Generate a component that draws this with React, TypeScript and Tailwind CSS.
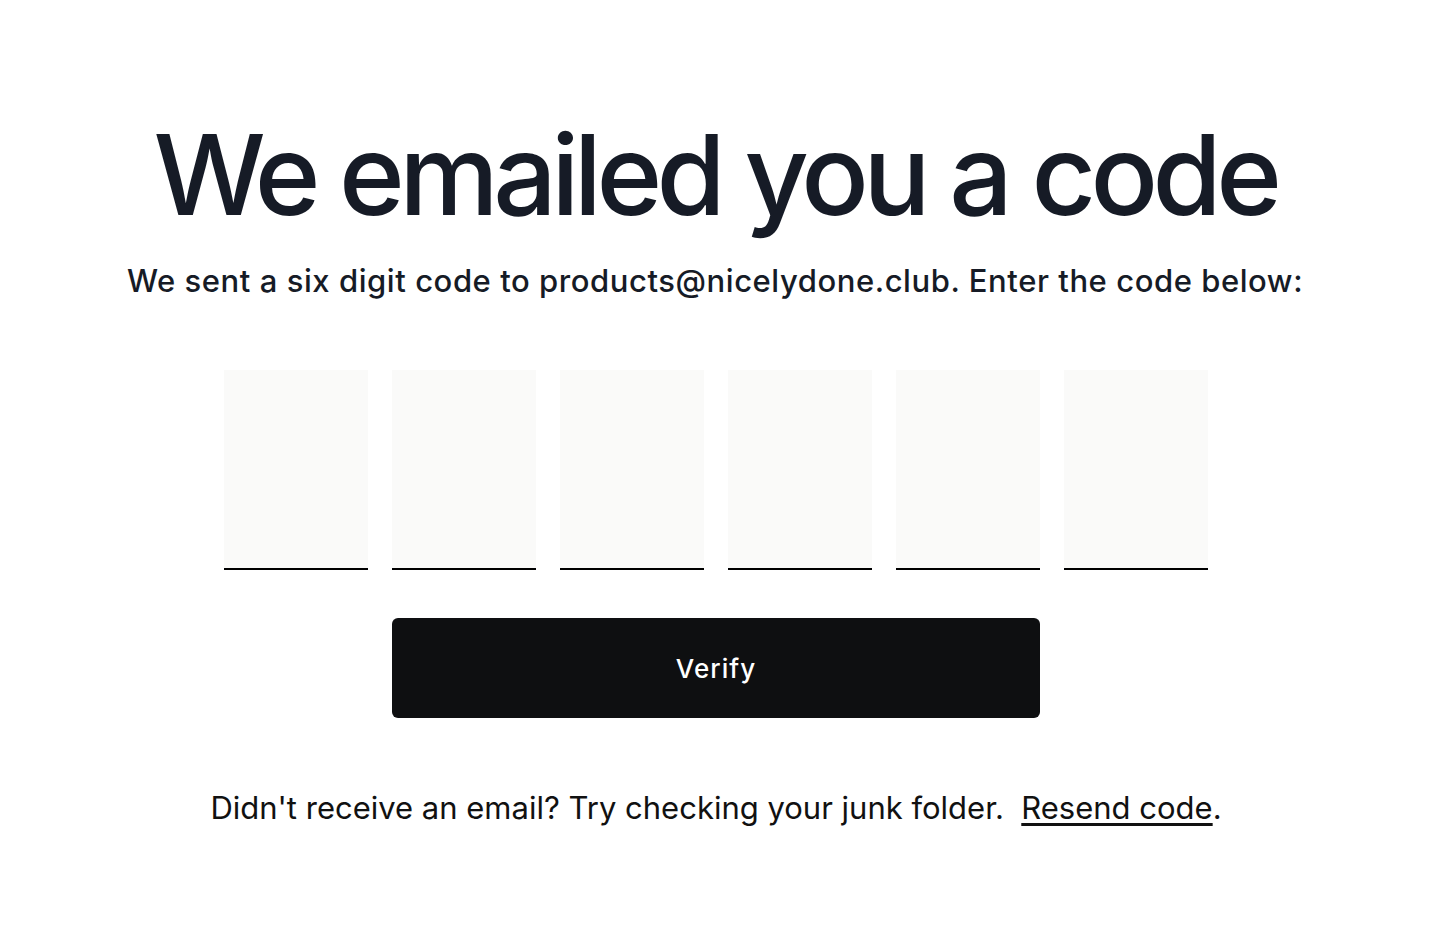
import React from "react";

export default function App() {
  const boxes = [0, 1, 2, 3, 4, 5];
  return (
    <div className="min-h-[952px] w-full bg-white flex flex-col items-center text-[#161b26]" style={{ fontFamily: "Inter, 'Liberation Sans', sans-serif" }}>
      <h1 className="mt-[104px] text-[112px] leading-[140px] font-medium tracking-[-0.05em] text-[#161b26]">We emailed you a code</h1>
      <p className="mt-[17px] text-[31px] leading-[40px] font-medium tracking-[0.018em]">We sent a six digit code to products@nicelydone.club. Enter the code below:</p>
      <div className="mt-[69px] pl-[2px] flex gap-[24px]">
        {boxes.map((b) => (
          <input key={b} className="w-[144px] h-[200px] bg-[#fafaf9] border-b-2 border-black outline-none text-center text-[60px]" maxLength={1} />
        ))}
      </div>
      <button className="mt-[48px] ml-[2px] w-[648px] h-[100px] rounded-[6px] bg-[#0e0f11] text-white text-[26px] font-medium tracking-[0.04em]">Verify</button>
      <p className="mt-[70px] ml-[2px] text-[31px] leading-[40px] text-[#111]">
        Didn't receive an email? Try checking your junk folder.&nbsp; <a className="underline underline-offset-4" href="#">Resend code</a>.
      </p>
    </div>
  );
}
